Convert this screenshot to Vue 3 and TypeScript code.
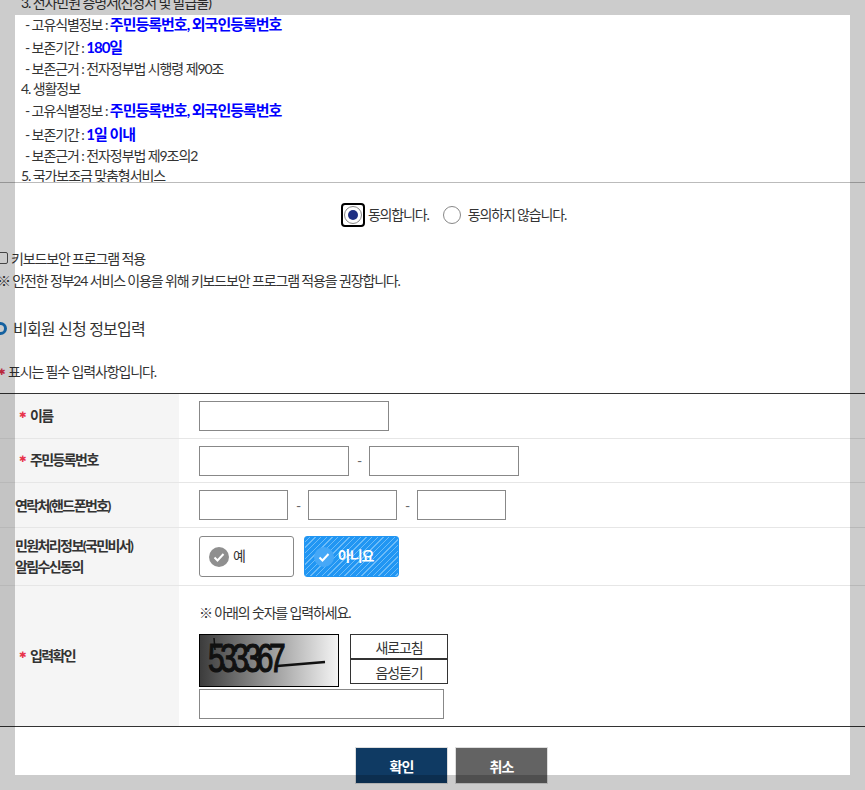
<script setup lang="ts">
interface Line { text: string; strong?: string; sub?: boolean }
const lines: Line[] = [
  { text: '3. 전자민원 증명서(신청서 및 발급물)' },
  { text: '- 고유식별정보 : ', strong: '주민등록번호, 외국인등록번호', sub: true },
  { text: '- 보존기간 : ', strong: '180일', sub: true },
  { text: '- 보존근거 : 전자정부법 시행령 제90조', sub: true },
  { text: '4. 생활정보' },
  { text: '- 고유식별정보 : ', strong: '주민등록번호, 외국인등록번호', sub: true },
  { text: '- 보존기간 : ', strong: '1일 이내', sub: true },
  { text: '- 보존근거 : 전자정부법 제9조의2', sub: true },
  { text: '5. 국가보조금 맞춤형서비스' },
]
</script>

<template>
  <div class="page">
    <div class="scrollbox">
      <div class="scroll-inner">
        <p v-for="(l, i) in lines" :key="i" class="line" :class="{ sub: l.sub, tall: l.strong }">
          {{ l.text }}<strong v-if="l.strong">{{ l.strong }}</strong>
        </p>
      </div>
    </div>

    <div class="agree">
      <span class="focus"><span class="radio on"><span class="dot"></span></span></span>
      <span class="agree-label">동의합니다.</span>
      <span class="radio off"></span>
      <span class="agree-label">동의하지 않습니다.</span>
    </div>

    <div class="keyboard">
      <span class="check"></span>
      <span>키보드보안 프로그램 적용</span>
    </div>
    <p class="notice">※ 안전한 정부24 서비스 이용을 위해 키보드보안 프로그램 적용을 권장합니다.</p>

    <h3 class="heading"><span class="ring"></span>비회원 신청 정보입력</h3>
    <p class="required"><span class="star">✱</span>표시는 필수 입력사항입니다.</p>

    <div class="form">
      <div class="row r1">
        <div class="th"><span class="star">✱</span>이름</div>
        <div class="td"><input class="field w190" type="text" /></div>
      </div>
      <div class="row r2">
        <div class="th"><span class="star">✱</span>주민등록번호</div>
        <div class="td">
          <input class="field w150" type="text" /><span class="dash">-</span><input class="field w150" type="text" />
        </div>
      </div>
      <div class="row r3">
        <div class="th plain">연락처(핸드폰번호)</div>
        <div class="td">
          <input class="field w89" type="text" /><span class="dash">-</span><input class="field w89" type="text" /><span class="dash">-</span><input class="field w89" type="text" />
        </div>
      </div>
      <div class="row r4">
        <div class="th plain two">민원처리정보(국민비서)<br />알림수신동의</div>
        <div class="td toggles">
          <div class="toggle">
            <span class="tick grey">
              <svg width="20" height="20" viewBox="0 0 20 20"><path d="M5.500 10.500l3 3 6-6.500" fill="none" stroke="#fff" stroke-width="2" /></svg>
            </span>
            <span class="toggle-label">예</span>
          </div>
          <div class="toggle active">
            <span class="tick blue">
              <svg width="20" height="20" viewBox="0 0 20 20"><path d="M5.500 10.500l3 3 6-6.500" fill="none" stroke="#fff" stroke-width="2" /></svg>
            </span>
            <span class="toggle-label">아니요</span>
          </div>
        </div>
      </div>
      <div class="row r5">
        <div class="th"><span class="star">✱</span>입력확인</div>
        <div class="td captcha">
          <p class="captcha-note">※ 아래의 숫자를 입력하세요.</p>
          <div class="captcha-top">
            <div class="captcha-img">
              <svg width="138" height="51" viewBox="0 0 138 51">
                <text transform="translate(8 37) scale(.75 1)" class="captcha-text">533367</text>
                <path d="M14 3l1 12" stroke="#111" stroke-width="1.500" />
                <path d="M77 31L125 27" stroke="#111" stroke-width="2.500" />
              </svg>
            </div>
            <div class="captcha-btns">
              <button class="cbtn" type="button">새로고침</button>
              <button class="cbtn" type="button">음성듣기</button>
            </div>
          </div>
          <input class="field w245" type="text" />
        </div>
      </div>
    </div>

    <div class="actions">
      <button class="btn primary" type="button">확인</button>
      <button class="btn secondary" type="button">취소</button>
    </div>

    <div class="highlight"></div>
  </div>
</template>

<style scoped>
.page {
  position: relative;
  width: 865px;
  height: 790px;
  overflow: hidden;
  background: #fff;
  color: #333;
  font-family: Lato, "Noto Sans CJK KR", sans-serif;
  font-size: 14px;
  letter-spacing: -1.150px;
}
p, h3 { margin: 0; }

.scrollbox {
  height: 182px;
  overflow: hidden;
  border-bottom: 1px solid #bbb;
}
.scroll-inner {
  padding-left: 21px;
  margin-top: -7.400px;
}
.line {
  height: 20px;
  line-height: 20px;
  white-space: nowrap;
  letter-spacing: -1.080px;
}
.line.tall {
  height: 23.300px;
  line-height: 23.300px;
}
.line.sub { padding-left: 4px; }
.line strong {
  color: #00f;
  font-size: 15px;
  font-weight: 700;
  letter-spacing: -1px;
}

.agree {
  display: flex;
  align-items: center;
  justify-content: center;
  height: 63px;
  padding-left: 42px;
}
.focus {
  display: flex;
  align-items: center;
  justify-content: center;
  width: 24px;
  height: 24px;
  border: 2px solid #000;
  border-radius: 4px;
  box-sizing: border-box;
  margin-right: 3px;
}
.radio {
  display: flex;
  align-items: center;
  justify-content: center;
  width: 18px;
  height: 18px;
  box-sizing: border-box;
  border: 1px solid #888;
  border-radius: 50%;
  background: #fff;
}
.radio.off { margin: 0 7px 0 14px; }
.dot {
  width: 10px;
  height: 10px;
  border-radius: 50%;
  background: #1e2e82;
}
.agree-label { padding-bottom: 1px; }

.keyboard {
  display: flex;
  align-items: center;
  gap: 3px;
  height: 24px;
  margin-left: -3px;
}
.check {
  width: 11px;
  height: 12px;
  box-sizing: border-box;
  border: 1px solid #555;
  border-radius: 2px;
}
.notice {
  height: 20px;
  line-height: 20px;
  margin-top: 1px;
  margin-left: -3px;
}

.heading {
  display: flex;
  align-items: center;
  gap: 6px;
  height: 24px;
  margin-top: 25px;
  margin-left: -6px;
  font-size: 16px;
  font-weight: 400;
  letter-spacing: -0.8px;
}
.ring {
  width: 13px;
  height: 13px;
  box-sizing: border-box;
  border: 3px solid #1a7ac8;
  border-radius: 50%;
}

.required {
  display: flex;
  align-items: center;
  height: 20px;
  line-height: 20px;
  margin-top: 22px;
  margin-left: -2px;
}
.required .star { width: 10px; }
.star {
  flex: 0 0 auto;
  width: 11px;
  font-family: "DejaVu Sans", sans-serif;
  font-size: 9px;
  font-weight: 700;
  letter-spacing: 0;
  color: #e8334a;
}

.form {
  margin-top: 11px;
  border-top: 1px solid #333;
  border-bottom: 1px solid #333;
}
.row {
  display: flex;
  border-bottom: 1px solid #e6e6e6;
}
.row:last-child { border-bottom: 0; }
.r1 { height: 44px; }
.r2 { height: 43px; }
.r3 { height: 44px; }
.r4 { height: 57px; }
.r5 { height: 140px; }
.th {
  display: flex;
  align-items: center;
  flex: 0 0 179px;
  box-sizing: border-box;
  padding-left: 19px;
  padding-bottom: 3px;
  background: #f5f5f5;
  font-weight: 700;
  letter-spacing: -1.600px;
  white-space: pre;
}
.th.plain { padding-left: 15px; padding-bottom: 0; }
.th.two { display: block; padding-top: 7px; line-height: 21px; }
.td {
  display: flex;
  align-items: center;
  padding-left: 20px;
}
.field {
  display: block;
  height: 30px;
  box-sizing: border-box;
  border: 1px solid #888;
  background: #fff;
  padding: 0;
}
.w190 { width: 190px; }
.w150 { width: 150px; }
.w89 { width: 89px; }
.w245 { width: 245px; }
.dash {
  width: 20px;
  text-align: center;
  color: #666;
}

.toggles { gap: 10px; }
.toggle {
  display: flex;
  align-items: center;
  gap: 4px;
  width: 95px;
  height: 41px;
  box-sizing: border-box;
  padding-left: 9px;
  border: 1px solid #888;
  border-radius: 3px;
  background: #fff;
}
.toggle-label { padding-bottom: 4px; }
.toggle.active {
  border-color: #2196f3;
  color: #fff;
  font-weight: 700;
  background: repeating-linear-gradient(135deg, #2196f3 0 3px, #6dbcf8 3px 4px);
}
.tick {
  display: flex;
  flex: 0 0 20px;
  width: 20px;
  height: 20px;
  border-radius: 50%;
}
.tick.grey { background: #8f8f8f; }
.tick.blue { background: #46a8f7; }

.captcha {
  flex-direction: column;
  align-items: flex-start;
}
.captcha-note {
  height: 20px;
  line-height: 20px;
  margin-top: 17px;
}
.captcha-top {
  display: flex;
  gap: 11px;
  margin-top: 11px;
}
.captcha-img {
  width: 140px;
  height: 53px;
  box-sizing: border-box;
  border: 1px solid #000;
  background: linear-gradient(90deg, #3c3c3c, #f4f4f4);
}
.captcha-img svg { display: block; }
.captcha-text {
  font-family: "Liberation Sans", sans-serif;
  font-size: 40px;
  fill: #111;
  stroke: #111;
  stroke-width: 1.200;
  letter-spacing: -6px;
}
.captcha-btns { display: flex; flex-direction: column; }
.cbtn {
  width: 98px;
  height: 25px;
  box-sizing: border-box;
  border: 1px solid #333;
  background: #fff;
  color: #333;
  padding: 0;
  font: inherit;
  letter-spacing: inherit;
}
.captcha .w245 { margin-top: 2px; }

.actions {
  display: flex;
  justify-content: center;
  gap: 7px;
  margin-top: 20px;
  padding-left: 38px;
}
.btn {
  width: 93px;
  height: 37px;
  box-sizing: border-box;
  border: 1px solid #ddd;
  color: #fff;
  font: inherit;
  font-size: 14px;
  font-weight: 700;
  letter-spacing: -0.8px;
  padding: 0;
}
.primary { background: #0f3a63; }
.secondary { background: #636363; }

.highlight {
  position: absolute;
  inset: 0;
  border: 15px solid rgba(0, 0, 0, 0.2);
  pointer-events: none;
}
</style>
